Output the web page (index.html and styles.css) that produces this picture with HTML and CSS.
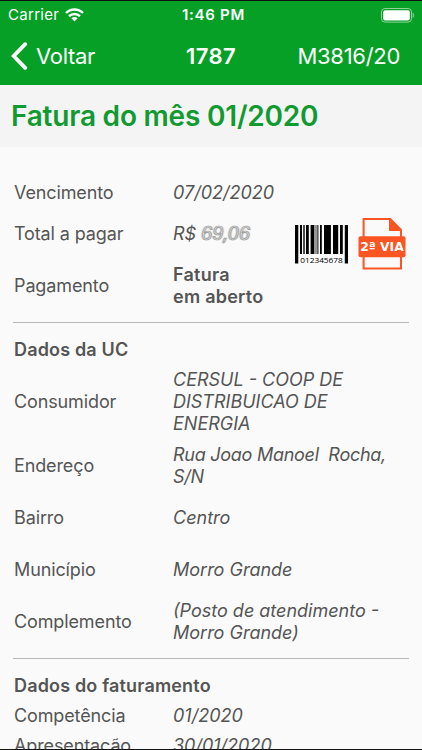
FILE: index.html
```html
<!DOCTYPE html>
<html lang="pt-BR">
<head>
  <meta charset="UTF-8" />
  <meta name="viewport" content="width=device-width, initial-scale=1" />
  <title>Fatura</title>
  <link rel="stylesheet" href="styles.css">
</head>
<body>

  <header>
    <div class="status-bar">
      <div class="carrier">
        <span>Carrier</span>
        <svg class="wifi" viewBox="0 0 19 14" width="19" height="14">
          <path d="M1 5 A12 12 0 0 1 18 5" fill="none" stroke="#fff" stroke-width="2.4" />
          <path d="M4 8.2 A7.8 7.8 0 0 1 15 8.2" fill="none" stroke="#fff" stroke-width="2.4" />
          <path d="M9.5 13.4 L6.4 10.3 A4.4 4.4 0 0 1 12.6 10.3 Z" fill="#fff" />
        </svg>
      </div>
      <span class="time">1:46 PM</span>
      <svg class="battery" viewBox="0 0 34 15" width="34" height="15">
        <rect x="0.5" y="0.5" width="30" height="13.6" rx="3.5" fill="none" stroke="#8fd39b" />
        <rect x="2.2" y="2.2" width="26.6" height="10.2" rx="2" fill="#fff" />
        <path d="M32 5 Q33.6 7.3 32 9.6 Z" fill="#8fd39b" stroke="#8fd39b" stroke-width=".6" />
      </svg>
    </div>
    <nav class="nav-bar">
      <a class="back">
        <svg viewBox="0 0 18 28" width="18" height="28">
          <path d="M15.2 2.2 L3.7 14 L15.2 25.8" fill="none" stroke="#fff" stroke-width="3.8" stroke-linecap="round" />
        </svg>
        <span>Voltar</span>
      </a>
      <span class="nav-title">1787</span>
      <span class="meter">M3816/20</span>
    </nav>
  </header>

  <h1>Fatura do mês 01/2020</h1>

  <main>
    <section class="summary">
      <div class="row short"><span class="label">Vencimento</span><span class="value">07/02/2020</span></div>
      <div class="row short"><span class="label">Total a pagar</span><span class="value">R$ <span class="amount">69,06</span></span></div>
      <div class="row open"><span class="label">Pagamento</span><strong class="value">Fatura<br>em aberto</strong></div>

      <div class="actions">
        <svg class="barcode" viewBox="0 0 53 39" width="53" height="39">
          <path d="M0 0h3.3v38.5H0zM5 0h2v29H5zM8.3 0h1.4v29H8.3zM11 0h2.8v29H11zM15.6 0h3.8v29h-3.8zM20.6 0h.8v29h-.8zM22.4 0h1v29h-1zM25 0h1.8v29H25zM29 0h6.9v29H29zM38 0h5.2v29H38zM45 0h2.8v29H45zM49.8 0H53v38.5h-3.2z" />
          <text x="26.5" y="37.8" textLength="42.5" lengthAdjust="spacingAndGlyphs">012345678</text>
        </svg>
        <svg class="second-copy" viewBox="0 0 48 54" width="48" height="54">
          <path d="M5.6 20V2h26.7L43 12.8V20M5.6 39v12.5H43V39" fill="none" stroke="#fa5523" stroke-width="2" />
          <path d="M31 1l13 13H31z" fill="#fa5523" />
          <rect x="0.5" y="19.3" width="47" height="21" rx="2" fill="#fa5523" />
          <text x="24" y="34.4" textLength="43.5" lengthAdjust="spacingAndGlyphs">2ª VIA</text>
        </svg>
      </div>
    </section>

    <section>
      <h2>Dados da UC</h2>
      <div class="row consumer"><span class="label">Consumidor</span><span class="value">CERSUL - COOP DE DISTRIBUICAO DE ENERGIA</span></div>
      <div class="row"><span class="label">Endereço</span><span class="value address">Rua Joao Manoel&nbsp; Rocha, S/N</span></div>
      <div class="row"><span class="label">Bairro</span><span class="value">Centro</span></div>
      <div class="row"><span class="label">Município</span><span class="value">Morro Grande</span></div>
      <div class="row"><span class="label">Complemento</span><span class="value">(Posto de atendimento - Morro Grande)</span></div>
    </section>

    <section class="billing">
      <h2>Dados do faturamento</h2>
      <div class="row compact"><span class="label">Competência</span><span class="value">01/2020</span></div>
      <div class="row compact"><span class="label">Apresentação</span><span class="value">30/01/2020</span></div>
    </section>
  </main>

</body>
</html>
```

FILE: styles.css
```css
* {
  box-sizing: border-box;
}
body {
  margin: 0;
  height: 750px;
  overflow: hidden;
  display: flex;
  flex-direction: column;
  font-family: Inter, "Liberation Sans", sans-serif;
  font-size: 18px;
  line-height: 22px;
  color: #555;
  background: #fafafa;
  border-top: 1px solid #111;
  border-bottom: 1px solid #111;
}
header {
  flex: none;
  height: 84px;
  background: #06a027;
  color: #fff;
}
.status-bar {
  display: grid;
  grid-template-columns: 1fr auto 1fr;
  align-items: center;
  height: 28px;
  padding: 0 7px 0 8px;
  font-size: 15px;
}
.carrier {
  display: flex;
  align-items: center;
  gap: 6px;
  letter-spacing: .3px;
}
.time {
  margin-left: 4px;
  font-weight: 600;
  letter-spacing: .7px;
}
.battery {
  justify-self: end;
}
.nav-bar {
  display: grid;
  grid-template-columns: 1fr auto 1fr;
  align-items: center;
  height: 54px;
  padding: 0 10px;
  font-size: 22px;
  letter-spacing: -.3px;
}
.back {
  display: flex;
  align-items: center;
  gap: 8px;
}
.nav-title {
  font-weight: 600;
  letter-spacing: .4px;
}
.meter {
  justify-self: end;
  margin-right: 12px;
}
h1 {
  flex: none;
  height: 62px;
  margin: 0;
  padding: 0 11px;
  font-size: 28px;
  font-weight: 600;
  line-height: 62px;
  letter-spacing: -.2px;
  color: #109a30;
  background: #f4f4f4;
}
main {
  padding: 25px 13px 0;
}
section {
  padding-bottom: 10px;
}
section + section {
  border-top: 1px solid #b8b8b8;
  padding-top: 16px;
}
.summary {
  position: relative;
  height: 150px;
}
.row {
  display: grid;
  grid-template-columns: 159px 1fr;
  align-items: center;
  height: 52px;
  padding-left: 1px;
}
.row.short {
  height: 41px;
}
.row.open {
  height: 64px;
}
.row.consumer {
  height: 76px;
}
.row.compact {
  height: 30px;
}
.label {
  letter-spacing: -.12px;
}
.value {
  font-style: italic;
}
.value.address {
  letter-spacing: -.27px;
}
strong.value {
  font-style: normal;
  font-weight: 600;
  letter-spacing: .25px;
}
/* amount is masked */
.amount {
  color: #ddd;
  -webkit-text-stroke: .7px #999;
  text-shadow: 1px 0 1px #ccc, -1px 0 1px #ccc;
}
h2 {
  margin: 0 0 3px;
  padding-left: 1px;
  font-size: 18px;
  font-weight: 600;
  line-height: 22px;
  letter-spacing: .17px;
}
.billing h2 {
  margin-bottom: 4px;
}
/* payment shortcuts sit over the right side of the rows */
.actions {
  position: absolute;
  top: 45px;
  right: 3px;
  display: flex;
  align-items: center;
  gap: 10px;
}
.barcode text {
  font: 8px "Open Sans", sans-serif;
  text-anchor: middle;
}
.second-copy text {
  font: bold 13px "DejaVu Sans", sans-serif;
  text-anchor: middle;
  fill: #fff;
}
```
